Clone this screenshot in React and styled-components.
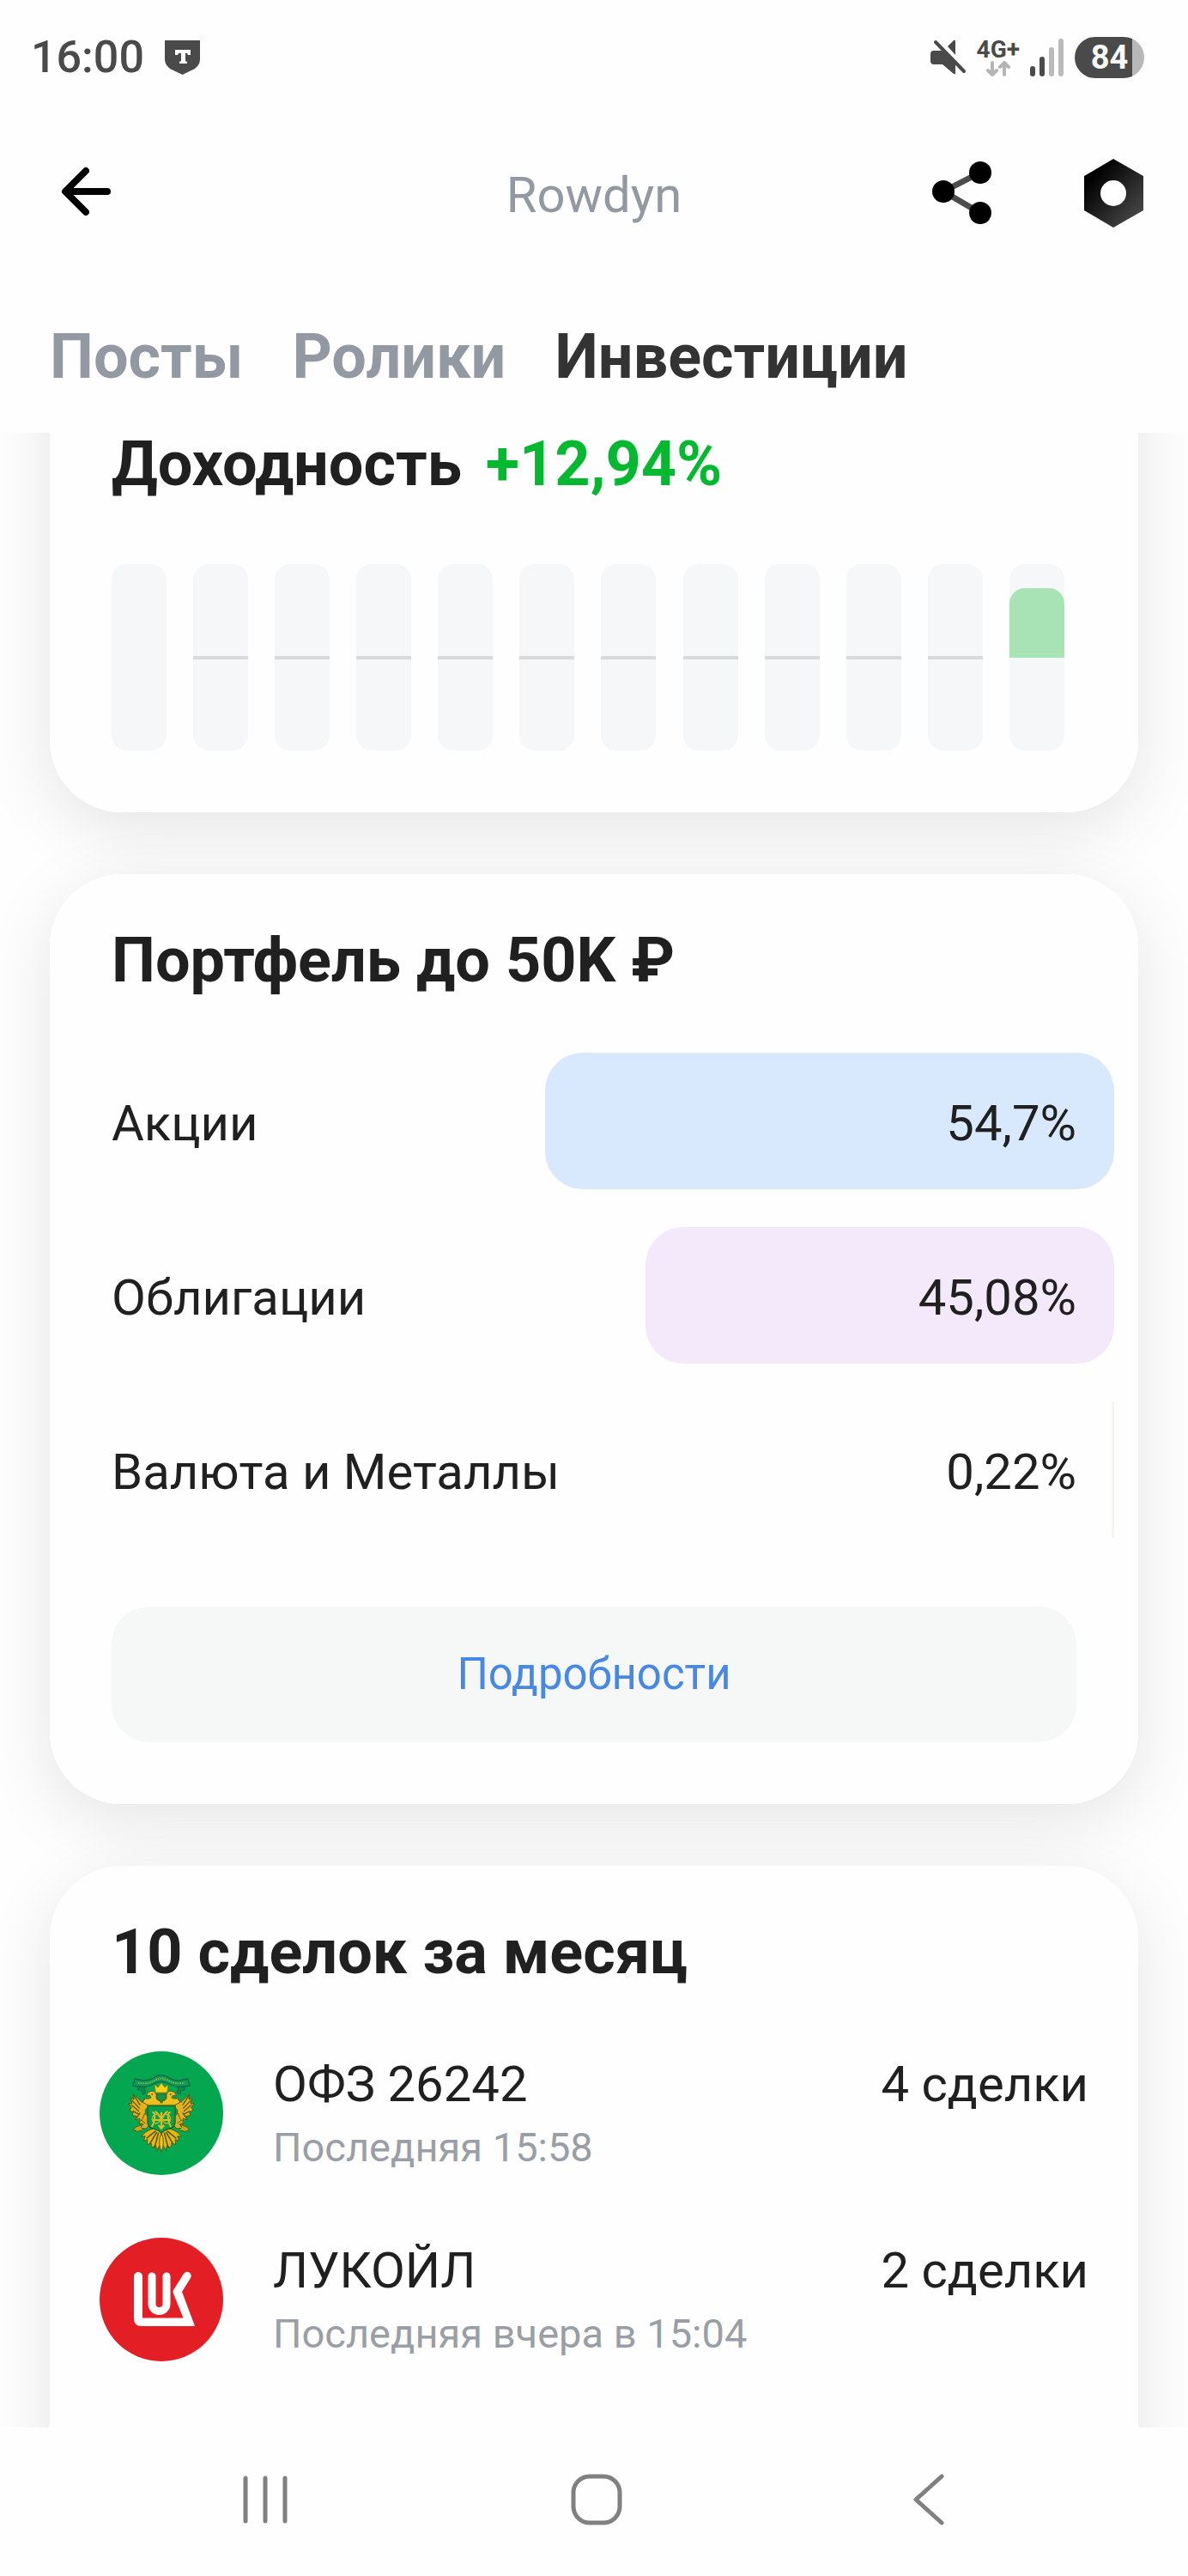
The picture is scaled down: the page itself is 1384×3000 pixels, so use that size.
import styled, { createGlobalStyle } from "styled-components";

const GlobalStyle = createGlobalStyle`
    * { box-sizing: border-box; }
    body {
        margin: 0;
        background: #fefefe;
        color: #202020;
        font-family: Roboto, "Liberation Sans", sans-serif;
    }
    button {
        font: inherit;
        color: inherit;
        border: none;
        padding: 0;
        background: none;
        cursor: pointer;
    }
    svg { display: block; flex: none; }
    h2, p { margin: 0; }
`;

const Screen = styled.div`
    display: flex;
    flex-direction: column;
    min-height: 100vh;
`;

/* ---------- status bar ---------- */

const StyledStatusBar = styled.div`
    display: flex;
    align-items: center;
    justify-content: space-between;
    height: 133px;
    padding: 0 51px 0 36px;
    color: #4a4a4a;
`;

const StatusGroup = styled.div`
    display: flex;
    align-items: center;
    gap: ${(props) => props.$gap}px;
`;

const Clock = styled.span`
    font-size: 52px;
    line-height: 60px;
    font-weight: 500;
`;

const Network = styled.div`
    display: flex;
    flex-direction: column;
    align-items: center;
    font-size: 28px;
    line-height: 26px;
    font-weight: 700;
`;

const Battery = styled.div`
    display: flex;
    align-items: center;
    justify-content: center;
    width: 81px;
    height: 48px;
    border-radius: 24px;
    background: linear-gradient(to right, #4a4a4a 83%, #b8b8b8 83%);
    color: #f8f8f8;
    font-size: 38px;
    line-height: 48px;
    font-weight: 700;
`;

function StatusBar() {
    return (
        <StyledStatusBar>
            <StatusGroup $gap={24}>
                <Clock>16:00</Clock>
                <svg width="42" height="42" viewBox="0 0 42 42">
                    <path d="M0 1h41v22c0 5-3 9-7 11.500L20.500 41 7 34.500C3 32 0 28 0 23z" fill="#4a4a4a" />
                    <path d="M12 12h18v6h-3l-1-2h-2v9l2 1v2h-9v-2l2-1v-9h-3l-1 2h-3z" fill="#fff" />
                </svg>
            </StatusGroup>
            <StatusGroup $gap={12}>
                <svg width="42" height="42" viewBox="0 0 42 42" fill="#4a4a4a">
                    <path d="M0 17q0-4 4-4h10l15 16v10q0 2-2 1L14 29H4q-4 0-4-4zM20 8l7-7q2-1 2 1v16z" />
                    <path d="M6 3l33 34" stroke="#4a4a4a" strokeWidth="4" strokeLinecap="round" />
                </svg>
                <Network>
                    4G+
                    <svg width="30" height="18" viewBox="0 0 30 18" fill="none" stroke="#b5b5b5" strokeWidth="4" strokeLinecap="round" strokeLinejoin="round">
                        <path d="M8 2v13M3 11l5 5 5-5M22 16V3M17 7l5-5 5 5" />
                    </svg>
                </Network>
                <svg width="40" height="44" viewBox="0 0 40 44">
                    <rect x="0" y="32" width="6" height="12" rx="3" fill="#4a4a4a" />
                    <rect x="11" y="21" width="6" height="23" rx="3" fill="#4a4a4a" />
                    <rect x="22" y="10" width="6" height="34" rx="3" fill="#bababa" />
                    <rect x="33" y="0" width="6" height="44" rx="3" fill="#bababa" />
                </svg>
                <Battery>84</Battery>
            </StatusGroup>
        </StyledStatusBar>
    );
}

/* ---------- header and tabs ---------- */

const StyledHeader = styled.header`
    display: grid;
    grid-template-columns: 1fr auto 1fr;
    align-items: center;
    height: 186px;
    padding: 0 40px;
`;

const Title = styled.div`
    padding-top: 2px;
    font-size: 58px;
    line-height: 68px;
    color: #9299a2;
`;

const HeaderActions = styled.div`
    display: flex;
    justify-content: flex-end;
    gap: 80px;
`;

function Header() {
    return (
        <StyledHeader>
            <div>
                <button aria-label="Назад">
                    <svg width="96" height="96" viewBox="0 0 96 96" fill="none" stroke="#000" strokeWidth="8" strokeLinecap="round" strokeLinejoin="round">
                        <path d="M85 47H37M60 23L36 47l24 24" />
                    </svg>
                </button>
            </div>
            <Title>Rowdyn</Title>
            <HeaderActions>
                <button aria-label="Поделиться">
                    <svg width="96" height="96" viewBox="0 0 96 96">
                        <path d="M70 23L27 45l43 25" fill="none" stroke="#4d4d4d" strokeWidth="7" />
                        <circle cx="27" cy="45" r="13" />
                        <circle cx="70" cy="23" r="13" />
                        <circle cx="70" cy="70" r="13" />
                    </svg>
                </button>
                <button aria-label="Настройки">
                    <svg width="96" height="96" viewBox="0 0 96 96">
                        <defs>
                            <linearGradient id="nut" x1="0.2" y1="0.2" x2="0.9" y2="0.9">
                                <stop offset="0" stopColor="#000" />
                                <stop offset="1" stopColor="#484848" />
                            </linearGradient>
                        </defs>
                        <path d="M49 7l35 20v40L49 87 15 67V27z" fill="url(#nut)" />
                        <circle cx="49" cy="47" r="15" fill="#fff" />
                    </svg>
                </button>
            </HeaderActions>
        </StyledHeader>
    );
}

const Tabs = styled.nav`
    display: flex;
    gap: 57px;
    padding: 55px 58px 46px;
`;

const Tab = styled.button`
    font-size: 72px;
    line-height: 84px;
    font-weight: 700;
    color: ${(props) => (props.$active ? "#333333" : "#9299a2")};
`;

/* ---------- cards ---------- */

const Feed = styled.main`
    flex: 1;
    display: flex;
    flex-direction: column;
    gap: 72px;
    padding: 0 58px;
    overflow: hidden;
    isolation: isolate;
`;

/* the shadow sits on its own layer so it never falls on a neighbour card */
const Card = styled.section`
    position: relative;
    padding: 59px 72px 72px;
    border-radius: 84px;
    background: #fefefe;
    &::before {
        content: "";
        position: absolute;
        inset: 0;
        z-index: -1;
        border-radius: 84px;
        box-shadow: 0 20px 80px rgba(0, 0, 0, 0.1);
    }
`;

/* scrolled under the tabs, only its lower part is in view */
const ProfitCard = styled(Card)`
    margin-top: -180px;
    padding-top: 175px;
`;

const DealsCard = styled(Card)`
    flex: 1;
    margin-bottom: -200px;
    padding: 59px 58px 239px;
`;

const CardTitle = styled.h2`
    font-size: 72px;
    line-height: 84px;
    font-weight: 700;
    span { color: #04b92f; margin-left: 10px; }
`;

const Chart = styled.div`
    display: flex;
    justify-content: space-between;
    height: 217px;
    margin: 74px 14px 0 0;
`;

const Month = styled.div`
    display: flex;
    flex-direction: column;
    justify-content: flex-end;
    width: 64px;
    border-radius: 18px;
    background: #f5f7f9;
`;

const Bar = styled.div`
    height: 81px;
    margin-bottom: 108px;
    border-radius: 18px 18px 0 0;
    background: #a8e3b6;
`;

const ZeroLine = styled.div`
    height: 4px;
    margin-bottom: 106px;
    background: #d8dadc;
`;

const months = ["none", "zero", "zero", "zero", "zero", "zero", "zero", "zero", "zero", "zero", "zero", "up"];

function Profit() {
    return (
        <ProfitCard>
            <CardTitle>Доходность <span>+12,94%</span></CardTitle>
            <Chart>
                {months.map((month, i) => (
                    <Month key={i}>
                        {month === "zero" && <ZeroLine />}
                        {month === "up" && <Bar />}
                    </Month>
                ))}
            </Chart>
        </ProfitCard>
    );
}

const Assets = styled.div`
    display: flex;
    flex-direction: column;
    gap: 44px;
    margin: 65px -44px 80px;
`;

const Asset = styled.div`
    position: relative;
    display: flex;
    align-items: center;
    justify-content: space-between;
    height: 159px;
    padding: 4px 44px 0;
    font-size: 58px;
    line-height: 76px;
    span { position: relative; }
`;

const Share = styled.div`
    position: absolute;
    top: 0;
    right: 0;
    bottom: 0;
    border-radius: 44px;
    background: ${(props) => props.$color};
`;

const DetailsButton = styled.button`
    width: 100%;
    height: 158px;
    border-radius: 44px;
    background: #f6f8f8;
    color: #4788e4;
    font-size: 51px;
    line-height: 60px;
`;

const assets = [
    { name: "Акции", value: "54,7%", width: 54.7, color: "#d8e9fe" },
    { name: "Облигации", value: "45,08%", width: 45.08, color: "#f4e8fb" },
    { name: "Валюта и Металлы", value: "0,22%", width: 0.22, color: "#f4f5ee" },
];

function Portfolio() {
    return (
        <Card>
            <CardTitle>Портфель до 50K ₽</CardTitle>
            <Assets>
                {assets.map((asset) => (
                    <Asset key={asset.name}>
                        <Share $color={asset.color} style={{ width: `${asset.width}%` }} />
                        <span>{asset.name}</span>
                        <span>{asset.value}</span>
                    </Asset>
                ))}
            </Assets>
            <DetailsButton>Подробности</DetailsButton>
        </Card>
    );
}

const DealsTitle = styled(CardTitle)`
    padding: 0 14px 4px;
`;

const Deal = styled.div`
    display: flex;
    gap: 58px;
    margin-top: 69px;
`;

const DealText = styled.div`
    flex: 1;
`;

const DealName = styled.p`
    font-size: 58px;
    line-height: 76px;
`;

const DealTime = styled.p`
    font-size: 47px;
    line-height: 72px;
    color: #9a9fa7;
`;

/* left half of the eagle, mirrored for the right one */
function EagleHalf() {
    return (
        <g stroke="#5b5a12" strokeWidth="3" strokeLinejoin="round">
            <path d="M26 42L22 60l14-2-4 22 14 4 2 12 12-6-6-14 10-14z" fill="#0a8a4b" stroke="#0b6a43" />
            <path d="M60 108l-14 16-30-28 2 18-12-4 6 18-12 0 10 16-8 6 14 10-4 10 14 2-2 14 14-6 2 26 18-22V150l14-14z" fill="#e3b21c" />
            <path d="M16 98l24 36M10 116l28 30M8 132l28 24M14 154l22 12M26 180l14-20" fill="none" strokeWidth="4" />
            <path d="M110 118c-8 2-14-4-14-12 2-14-6-24-20-20-8 2-12 8-14 16l12-2 4 8c-6 4-14 4-20 2l-10 14 20 10h44z" fill="#f0c020" />
            <circle cx="82" cy="96" r="3" fill="#5b5a12" stroke="none" />
            <path d="M56 162l-8 20-14 14 16 4-8 14 18 2 12-12-4-30z" fill="#dcae1e" />
            <path d="M40 204l-14 6-10 10 14 6 18-4M44 186l14 12" fill="#c9a51e" />
            <path d="M90 216c-20 4-34 12-46 28l14-2-6 16 14-4-2 18 14-6 4 18 12-12 4 20 16-28V226z" fill="#e6b81a" />
            <path d="M94 224L62 250M98 228L74 268M104 230L90 284" fill="none" strokeWidth="5" />
        </g>
    );
}

function OfzLogo() {
    return (
        <svg width="144" height="144" viewBox="0 0 144 144">
            <circle cx="72" cy="72" r="72" fill="#05a650" />
            <g transform="translate(34 18) scale(0.3333)">
                <EagleHalf />
                <g transform="translate(228 0) scale(-1 1)">
                    <EagleHalf />
                </g>
                <path d="M22 42q40 12 62-2 30-22 60 0 22 14 62 2l8 24q-46 10-72-6-28-16-56 0-26 16-72 6z" fill="#119a57" stroke="#0b6a43" strokeWidth="4" />
                <path d="M32 56q36 6 58-8 24-14 48 0 22 14 58 8" fill="none" stroke="#7fb64a" strokeWidth="5" strokeDasharray="5 3" />
                <path d="M94 90l-4-28 12 10 12-16 12 16 12-10-4 28z" fill="#f7cf1d" stroke="#8a7a12" strokeWidth="2" />
                <path d="M98 96h32q2 18-16 24-18-6-16-24z" fill="#0a9a4c" stroke="#5b5a12" strokeWidth="3" />
                <path d="M66 136h96v60q-2 18-26 22-14 4-22 14-8-10-22-14-24-4-26-22z" fill="#05a04d" stroke="#25601c" strokeWidth="4" />
                <path d="M70 130h88" stroke="#e8bd1c" strokeWidth="6" />
                <path d="M114 158v56M104 204l10 12 10-12M82 158q12 2 8 24t-10 28M146 158q-12 2-8 24t10 28M92 156q12 6 22 30 10-24 22-30M84 186h60" fill="none" stroke="#e0bd22" strokeWidth="6" />
                <ellipse cx="96" cy="182" rx="14" ry="16" fill="none" stroke="#d4b424" strokeWidth="4" />
                <ellipse cx="132" cy="182" rx="14" ry="16" fill="none" stroke="#d4b424" strokeWidth="4" />
                <path d="M114 232q-14 30 0 66 14-36 0-66z" fill="#f2c71c" stroke="#5b5a12" strokeWidth="3" />
            </g>
        </svg>
    );
}

function LukoilLogo() {
    return (
        <svg width="144" height="144" viewBox="0 0 144 144">
            <circle cx="72" cy="72" r="72" fill="#e31e25" />
            <path d="M40 45a5 5 0 0 1 10 0v48.500h47.500L86 65q-1-2 0-4l12-19a4.500 4.500 0 0 1 8 5L96 63l15 40H49q-9 0-9-9z" fill="#fff" />
            <path d="M61 45v32a8.500 8.500 0 0 0 17 0V45" fill="none" stroke="#fff" strokeWidth="9" strokeLinecap="round" />
        </svg>
    );
}

function Deals() {
    return (
        <DealsCard>
            <DealsTitle>10 сделок за месяц</DealsTitle>
            <Deal>
                <OfzLogo />
                <DealText>
                    <DealName>ОФЗ 26242</DealName>
                    <DealTime>Последняя 15:58</DealTime>
                </DealText>
                <DealName>4 сделки</DealName>
            </Deal>
            <Deal>
                <LukoilLogo />
                <DealText>
                    <DealName>ЛУКОЙЛ</DealName>
                    <DealTime>Последняя вчера в 15:04</DealTime>
                </DealText>
                <DealName>2 сделки</DealName>
            </Deal>
        </DealsCard>
    );
}

/* ---------- system navigation ---------- */

const SystemNav = styled.footer`
    display: flex;
    align-items: center;
    justify-content: space-around;
    height: 173px;
    padding: 0 109px 6px 116px;
`;

function Navigation() {
    return (
        <SystemNav>
            <button aria-label="Недавние">
                <svg width="60" height="60" viewBox="0 0 60 60" fill="none" stroke="#808080" strokeWidth="5" strokeLinecap="round">
                    <path d="M7 5v50M30 5v50M53 5v50" />
                </svg>
            </button>
            <button aria-label="Домой">
                <svg width="60" height="60" viewBox="0 0 60 60" fill="none" stroke="#808080" strokeWidth="5">
                    <rect x="3" y="3" width="54" height="54" rx="19" />
                </svg>
            </button>
            <button aria-label="Назад">
                <svg width="60" height="60" viewBox="0 0 60 60" fill="none" stroke="#808080" strokeWidth="5" strokeLinecap="round" strokeLinejoin="round">
                    <path d="M45 3L15 30l30 27" />
                </svg>
            </button>
        </SystemNav>
    );
}

export default function App() {
    return (
        <Screen>
            <GlobalStyle />
            <StatusBar />
            <Header />
            <Tabs>
                <Tab>Посты</Tab>
                <Tab>Ролики</Tab>
                <Tab $active>Инвестиции</Tab>
            </Tabs>
            <Feed>
                <Profit />
                <Portfolio />
                <Deals />
            </Feed>
            <Navigation />
        </Screen>
    );
}
